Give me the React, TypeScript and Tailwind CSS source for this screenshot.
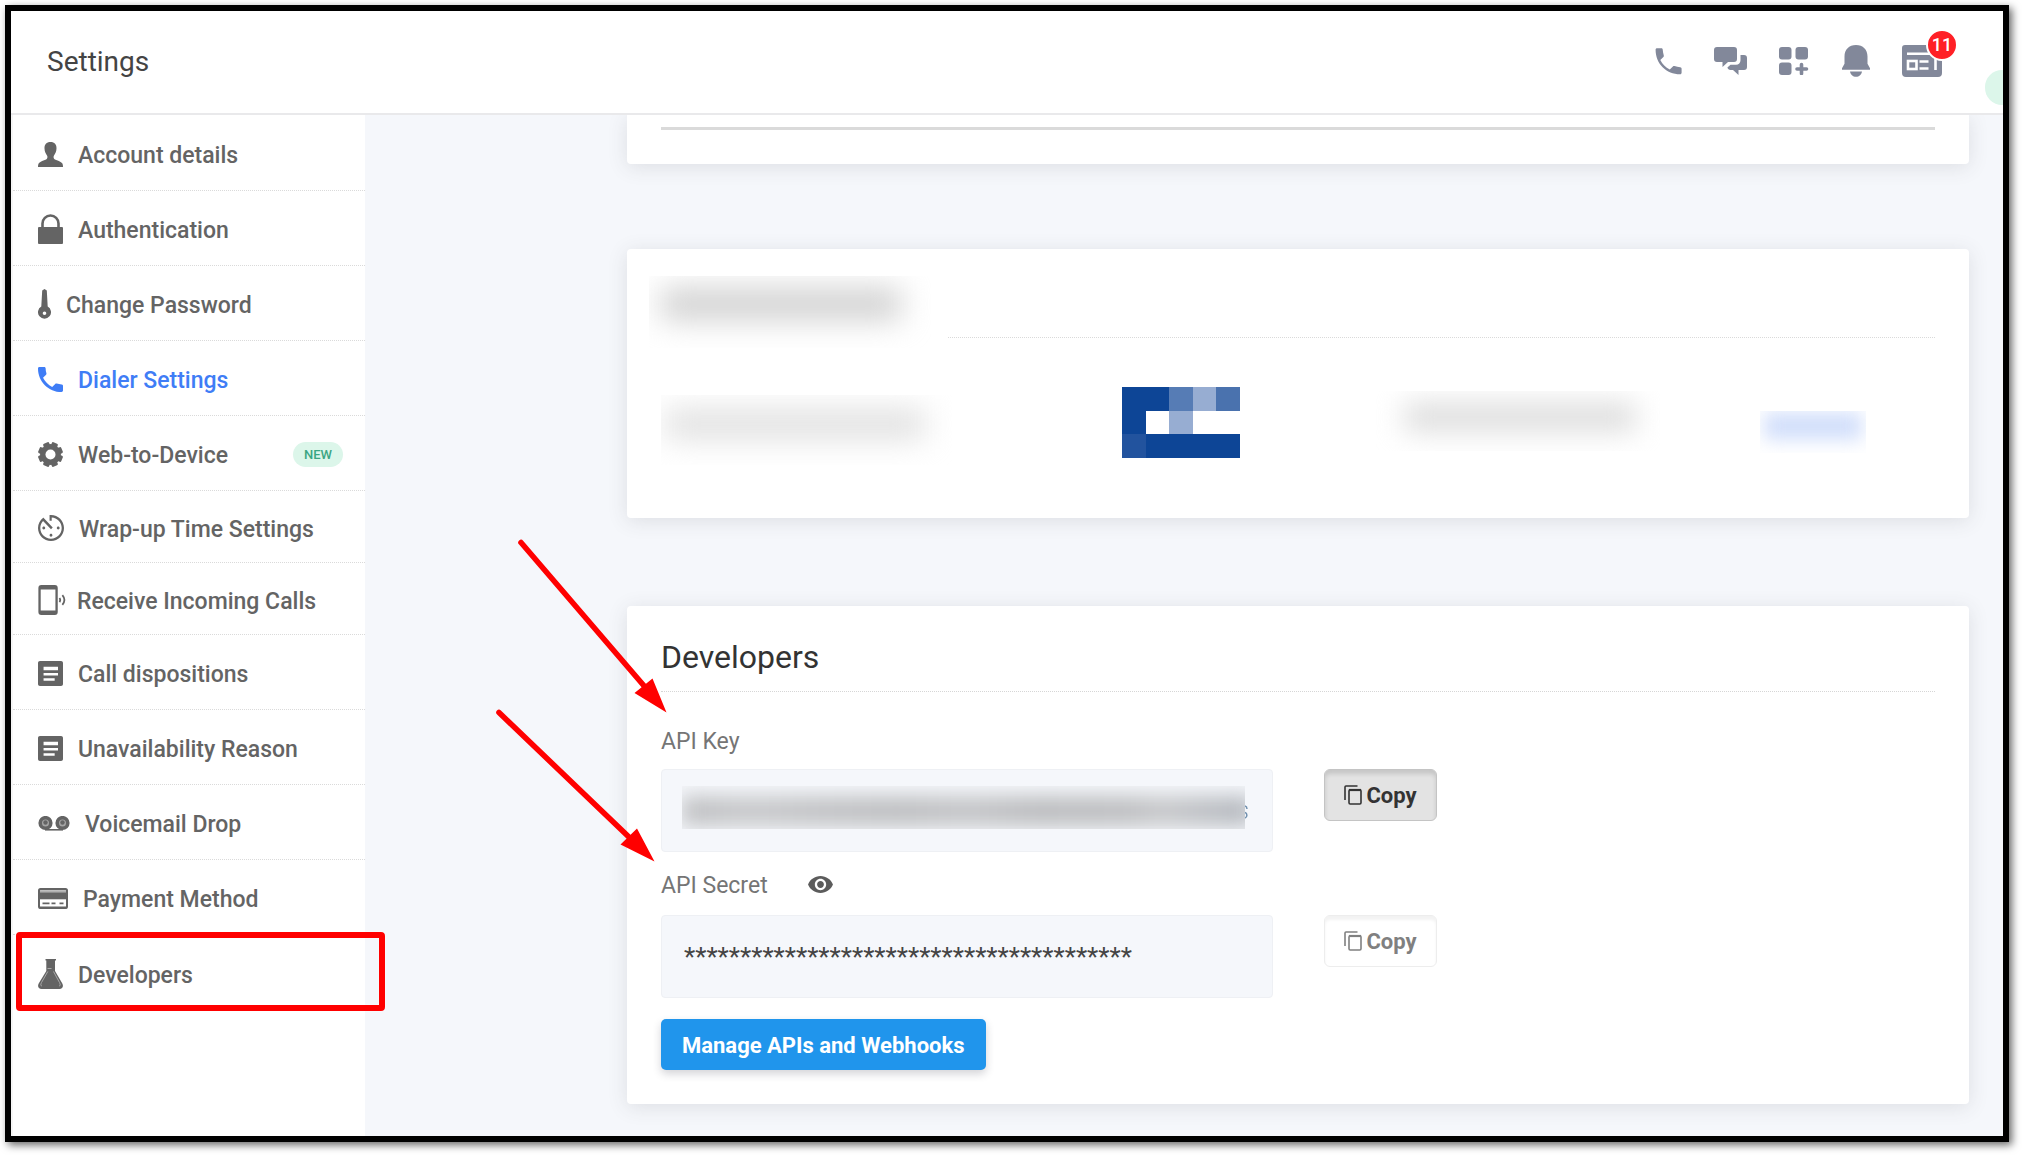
import type { ReactNode } from 'react';

const PHONE_PATH =
  'M6.62 10.79c1.44 2.83 3.76 5.14 6.59 6.59l2.2-2.2c.27-.27.67-.36 1.02-.24 1.12.37 2.33.57 3.57.57.55 0 1 .45 1 1V20c0 .55-.45 1-1 1-9.39 0-17-7.61-17-17 0-.55.45-1 1-1h3.5c.55 0 1 .45 1 1 0 1.25.2 2.45.57 3.57.11.35.03.74-.25 1.02l-2.2 2.2z';
const ARTICLE_PATH =
  'M19.6 3H4.4C3.6 3 3 3.6 3 4.4v15.2c0 .8.6 1.4 1.4 1.4h15.2c.8 0 1.4-.6 1.4-1.4V4.4c0-.8-.6-1.4-1.4-1.4zM15 17.2H7v-1.7h8v1.7zm2.4-3.8H7v-1.7h10.4v1.7zm0-3.8H7V7.2h10.4v2.4z';

const PersonIcon = () => (
  <svg width="25" height="25" viewBox="0 0 25 25" fill="currentColor">
    <path d="M12.5 0c4 0 6.2 2.6 6 6.5-.1 3.3-1.3 5.2-2.5 7-.8 1.3-.5 3.2.9 3.9 2.600 1.400 5.600 1.600 7.100 3.600.8 1 1 2.400 1 4H0c0-1.600.2-3 1-4 1.500-2 4.500-2.200 7.100-3.600 1.400-.7 1.700-2.600.9-3.900-1.200-1.800-2.400-3.700-2.500-7C6.300 2.600 8.500 0 12.500 0z" />
  </svg>
);

const LockIcon = () => (
  <svg width="25" height="30" viewBox="0 0 25 30">
    <path d="M4.500 14V9.500a8 8 0 0 1 16 0V14" fill="none" stroke="currentColor" strokeWidth="2.600" />
    <rect y="13" width="25" height="17" rx="1" fill="currentColor" />
  </svg>
);

const KeyIcon = () => (
  <svg width="13" height="30" viewBox="0 0 13 30" fill="currentColor" fillRule="evenodd">
    <path d="M4.200 1.500 6.500 0l2.300 1.500.9 16a6.500 6.500 0 1 1-6.400 0zM6.500 22.500a1.800 1.800 0 1 0 0 3.600 1.800 1.800 0 0 0 0-3.600z" />
  </svg>
);

const DialerIcon = () => (
  <svg width="25" height="25" viewBox="3 3 18 18" fill="currentColor">
    <path d={PHONE_PATH} />
  </svg>
);

const GearIcon = () => (
  <svg width="25" height="25" viewBox="0 0 25 25" fill="currentColor">
    {[22.5, 67.5, 112.5, 157.5].map((angle) => (
      <rect key={angle} x="9.300" y="0" width="6.400" height="25" rx="1.300" transform={`rotate(${angle} 12.5 12.5)`} />
    ))}
    <circle cx="12.500" cy="12.500" r="10.400" />
    <circle cx="12.500" cy="12.500" r="5" fill="#ffffff" />
  </svg>
);

const TimerIcon = () => (
  <svg width="26" height="26" viewBox="3 3 18 18" fill="currentColor">
    <path d="M11 17c0 .55.45 1 1 1s1-.45 1-1-.45-1-1-1-1 .45-1 1zm0-14v4h1.500V4.700c3.700.3 6.900 3.400 6.900 7.300 0 4.100-3.300 7.400-7.400 7.400S4.600 16.100 4.600 12c0-1.900.7-3.600 1.900-4.900L12 12.900l1.200-1.200-6.600-6.900v.02C4.420 6.450 3 9.050 3 12c0 4.970 4.020 9 9 9 4.970 0 9-4.030 9-9s-4.030-9-9-9h-1zm7 9c0-.55-.45-1-1-1s-1 .45-1 1 .45 1 1 1 1-.45 1-1zM6 12c0 .55.45 1 1 1s1-.45 1-1-.45-1-1-1-1 .45-1 1z" />
  </svg>
);

const IncomingIcon = () => (
  <svg width="24" height="30" viewBox="0 0 24 31" fill="none" stroke="currentColor" className="overflow-visible">
    <rect x="1.200" y="1.200" width="17.600" height="28.600" rx="1.800" strokeWidth="2.400" />
    <path d="M1 3h18M1 28h18" strokeWidth="3.400" />
    <path d="M21.800 13.500c.9 1.200.9 3 0 4.200" strokeWidth="1.800" />
    <path d="M24.800 10.500c2.500 3 2.500 7 0 10" strokeWidth="1.800" />
  </svg>
);

const ArticleIcon = () => (
  <svg width="25" height="25" viewBox="3 3 18 18" fill="currentColor">
    <path d={ARTICLE_PATH} />
  </svg>
);

const VoicemailIcon = () => (
  <svg width="32" height="15" viewBox="0 0 32 15">
    <path d="M7 13.800h18" stroke="currentColor" strokeWidth="1.600" />
    <circle cx="7.500" cy="7" r="5.300" fill="#a5a5a5" stroke="currentColor" strokeWidth="3.600" />
    <circle cx="24.500" cy="7" r="5.300" fill="#a5a5a5" stroke="currentColor" strokeWidth="3.600" />
    <circle cx="7.500" cy="6.500" r="2.200" fill="currentColor" />
    <circle cx="24.500" cy="6.500" r="2.200" fill="currentColor" />
  </svg>
);

const CardIcon = () => (
  <svg width="30" height="21" viewBox="0 0 30 21">
    <rect x="1" y="1" width="28" height="19" rx="1.500" fill="#ffffff" stroke="currentColor" strokeWidth="2" />
    <path d="M2 3.200h26" stroke="#b0b0b0" strokeWidth="2" />
    <path d="M1 7.800h28" stroke="currentColor" strokeWidth="7" />
    <path d="M4.500 15.300h7M13.500 15.300h4M21.500 15.300h4" stroke="currentColor" strokeWidth="1.800" />
    <path d="M1 19.500h28" stroke="currentColor" strokeWidth="2" />
  </svg>
);

const FlaskIcon = () => (
  <svg width="25" height="30" viewBox="0 0 25 30">
    <path d="M7.500 0h10.500v1.500h-1V12l7.300 12.500c1.500 2.800.2 5.500-2.800 5.500h-18c-3 0-4.300-2.700-2.800-5.500L8.300 12V1.500h-.8z" fill="currentColor" />
    <path d="M9.500 9.500h4M9.800 12.500 3.500 23.500c-1.200 2.300-.8 3.500.5 3.500M15.500 12.500l6 11c1.200 2.300.8 3.500-.5 3.500" fill="none" stroke="#a8a8a8" strokeWidth="1" />
  </svg>
);

interface NavItem {
  label: string;
  icon: ReactNode;
  active?: boolean;
  isNew?: boolean;
  compact?: boolean;
  marked?: boolean;
}

const navItems: NavItem[] = [
  { label: 'Account details', icon: <PersonIcon /> },
  { label: 'Authentication', icon: <LockIcon /> },
  { label: 'Change Password', icon: <KeyIcon /> },
  { label: 'Dialer Settings', icon: <DialerIcon />, active: true },
  { label: 'Web-to-Device', icon: <GearIcon />, isNew: true },
  { label: 'Wrap-up Time Settings', icon: <TimerIcon />, compact: true },
  { label: 'Receive Incoming Calls', icon: <IncomingIcon />, compact: true },
  { label: 'Call dispositions', icon: <ArticleIcon /> },
  { label: 'Unavailability Reason', icon: <ArticleIcon /> },
  { label: 'Voicemail Drop', icon: <VoicemailIcon /> },
  { label: 'Payment Method', icon: <CardIcon /> },
  { label: 'Developers', icon: <FlaskIcon />, marked: true },
];

function Sidebar() {
  return (
    <nav className="w-[354px] shrink-0 border-l-2 border-[#f6f6f6] bg-white pt-px">
      {navItems.map(({ label, icon, active, isNew, compact, marked }) => (
        <a
          key={label}
          href="#"
          className={`relative flex items-center gap-[15px] pt-[2px] pr-[22px] pl-[25px] text-[23px] leading-7 font-medium ${
            compact ? 'h-[72px]' : 'h-[75px]'
          } ${active ? 'text-[#3f7df6]' : 'text-[#646464]'} ${marked ? '' : 'border-b border-dotted border-[#dadada]'}`}
        >
          {icon}
          <span className="pt-1">{label}</span>
          {isNew && (
            <span className="ml-auto rounded-full bg-[#dcf6ea] px-[11px] text-[13px] leading-[25px] text-[#3ba583]">NEW</span>
          )}
          {marked && (
            <span className="pointer-events-none absolute -top-[3px] -right-5 -bottom-px left-[3px] z-10 rounded-[4px] border-6 border-[#ff0000] shadow-[0_0_2px_#ffffff,inset_0_0_2px_#ffffff]" />
          )}
        </a>
      ))}
    </nav>
  );
}

function Header() {
  return (
    <header className="relative flex h-[104px] items-center justify-between overflow-hidden border-b-2 border-[#e9e9eb] bg-white pr-[61px] pl-9">
      <h1 className="text-[28px] leading-9 text-[#444444]">Settings</h1>
      <div className="flex items-center gap-8 pb-[2px] text-[#82889a]">
        <button aria-label="Phone">
          <svg width="27" height="27" viewBox="0 0 27 27" fill="currentColor">
            <path d="M2 .3h4.200c.9 0 1.400.5 1.500 1.300.2 2 .5 4 1.100 5.800.2.600.1 1.100-.4 1.600L5.300 12.100c2.100 4.200 5.300 7.400 9.500 9.500l3.100-3.100c.5-.5 1-.6 1.600-.4 1.900.6 3.700.9 5.700 1.100.9.1 1.400.7 1.400 1.500v4.100c0 .9-.6 1.500-1.400 1.500C11.300 26.300.6 15.700.6 1.700.6.900 1.200.3 2 .3z" />
          </svg>
        </button>
        <button aria-label="Messages">
          <svg width="33" height="30" viewBox="0 0 33 30" fill="currentColor">
            <path d="M3 1h17a3 3 0 0 1 3 3v9a3 3 0 0 1-3 3h-6l-5.500 5v-5H3a3 3 0 0 1-3-3V4a3 3 0 0 1 3-3z" />
            <path d="M26.500 9H30a3 3 0 0 1 3 3v9a3 3 0 0 1-3 3h-5.500v5L19 24h-2.500c-1.600 0-2.700-1-3.100-2.400l3.100-2.800h5.500c2.700 0 4.500-1.800 4.500-4.500z" />
          </svg>
        </button>
        <button aria-label="Apps">
          <svg width="31" height="28" viewBox="0 0 31 28" fill="currentColor">
            <rect width="12.500" height="12.500" rx="3" />
            <rect x="16.500" width="12.500" height="12.500" rx="3" />
            <rect y="15.500" width="12.500" height="12.500" rx="3" />
            <path d="M22.500 17.500v9M18 22h9.500" fill="none" stroke="currentColor" strokeWidth="3.600" strokeLinecap="round" />
          </svg>
        </button>
        <button aria-label="Notifications">
          <svg width="28" height="32" viewBox="0 0 28 32" fill="currentColor">
            <path d="M14 0c7 0 11.500 4.700 11.500 11.500v7.300l2.500 4.400v1.600H0v-1.600l2.500-4.400v-7.300C2.500 4.700 7 0 14 0z" />
            <path d="M8 26.500h12c-.3 3-3 5.300-6 5.300s-5.700-2.300-6-5.300z" />
          </svg>
        </button>
        <button aria-label="News" className="relative">
          <svg width="40" height="32" viewBox="0 0 40 32" fill="currentColor">
            <path d="M3 0h30v14h7v14a4 4 0 0 1-4 4H4a4 4 0 0 1-4-4V3a3 3 0 0 1 3-3z" />
            <g fill="none" stroke="#ffffff" strokeWidth="2.600">
              <path d="M5 8.700h23M17.500 16.500h9M17.500 23.500h9M33.500 13v12" />
              <rect x="6" y="16" width="8.500" height="8" />
            </g>
          </svg>
          <span className="absolute -top-4 -right-4 flex h-8 w-8 items-center justify-center rounded-full border-2 border-white bg-[#ff2026] text-lg leading-none font-medium text-white">
            11
          </span>
        </button>
      </div>
      <span className="absolute -right-4 bottom-2 h-[35px] w-[34px] rounded-full bg-[#dcf6ea]" />
    </header>
  );
}

function Card({ children, className }: { children: ReactNode; className: string }) {
  return <section className={`relative rounded-[4px] bg-white px-[34px] shadow-[0_3px_20px_rgba(60,60,70,0.13)] ${className}`}>{children}</section>;
}

// Censored card brand, one colour per block
const logoBlocks = [
  'bg-[#0d4596]', 'bg-[#0d4596]', 'bg-[#567cb5]', 'bg-[#97add2]', 'bg-[#4a72ae]',
  'bg-[#0d4596]', 'bg-white', 'bg-[#97add2]', 'bg-white', 'bg-white',
  'bg-[#22539e]', 'bg-[#0d4596]', 'bg-[#0d4596]', 'bg-[#0d4596]', 'bg-[#0d4596]',
];

function PaymentCard() {
  return (
    <Card className="mt-[85px] h-[269px]">
      <div className="-ml-3 flex h-[89px] items-start gap-[17px]">
        <div className="mt-[27px] h-[72px] w-[282px] overflow-hidden pt-3 pl-3">
          <div className="h-8 w-[240px] bg-[#d0d0d0] blur-[15px]" />
        </div>
        <div className="flex-1 self-end border-b border-dotted border-[#dadada]" />
      </div>
      <div className="grid grid-cols-[461px_254px_1fr_106px] items-start pt-[49px] pr-[69px]">
        <div className="mt-2 h-[70px] w-[292px] overflow-hidden pt-[14px] pl-1">
          <div className="h-[30px] w-[260px] bg-[#e0e0e0] blur-[15px]" />
        </div>
        <div className="grid h-[71px] w-[118px] grid-cols-5 grid-rows-3">
          {logoBlocks.map((color, i) => (
            <span key={i} className={color} />
          ))}
        </div>
        <div className="mt-1 h-[60px] w-[284px] overflow-hidden pt-3 pl-[28px]">
          <div className="h-[28px] w-[232px] bg-[#dcdcdc] blur-[14px]" />
        </div>
        <div className="mt-6 h-[42px] w-[106px] overflow-hidden px-1 pt-px">
          <div className="h-[28px] bg-[#d2dffb] blur-[9px]" />
        </div>
      </div>
    </Card>
  );
}

function CopyButton({ pressed }: { pressed?: boolean }) {
  return (
    <button
      className={`flex h-[52px] w-[113px] shrink-0 items-center justify-center gap-[4px] rounded-[6px] border text-[22px] font-bold ${
        pressed
          ? 'border-[#c4c4c4] bg-[#e3e3e3] text-[#333333] shadow-[inset_0_4px_4px_rgba(0,0,0,0.13)]'
          : 'border-[#ededed] bg-white text-[#808080] shadow-[inset_0_4px_3px_rgba(0,0,0,0.05)]'
      }`}
    >
      <svg width="18" height="20" viewBox="0 0 18 20" fill="none" stroke="currentColor">
        <path d="M1 15V2c0-.6.400-1 1-1h11.500" strokeWidth="1.600" />
        <rect x="5" y="4.800" width="12" height="14.200" rx="1.200" strokeWidth="1.600" />
        <path d="M5 5h12" strokeWidth="2.200" />
      </svg>
      <span>Copy</span>
    </button>
  );
}

function Arrows() {
  return (
    <svg className="pointer-events-none absolute -top-[76px] -left-[142px] z-10" width="190" height="340" viewBox="485 530 190 340">
      <g stroke="#ff0000" strokeWidth="5.600" strokeLinecap="round">
        <path d="M521 542.500 645 687" />
        <path d="M499 712.500 631 839" />
      </g>
      <path d="M666.500 712.500 634.500 693l18-14.500zM654.500 861.500 620.500 844.500l16.500-16z" fill="#ff0000" />
    </svg>
  );
}

function DevelopersCard() {
  return (
    <Card className="mt-[88px] pt-8 pb-[34px]">
      <h2 className="border-b border-dotted border-[#d6d6d6] pb-[15px] text-[32px] leading-[38px] text-[#333333]">Developers</h2>
      <label htmlFor="api-key" className="mt-[36px] mb-[13px] block w-fit text-[23px] leading-7 text-[#757575]">
        API Key
      </label>
      <div className="flex items-start gap-[51px]">
        <div className="relative w-[612px] min-w-0">
          <input id="api-key" readOnly className="block h-[83px] w-full rounded-[4px] border border-[#eef0f4] bg-[#f5f7fb] px-[22px]" />
          <div className="pointer-events-none absolute inset-x-0 top-[17px] mr-7 ml-[21px] h-[43px] overflow-hidden py-[10px]">
            <div className="-mr-2 h-[30px] bg-[linear-gradient(90deg,#bfc0c2,#c8c9cb_12%,#c2c3c5_25%,#bebfc1_38%,#c4c5c7_50%,#bcbdbf_62%,#bebfc1_78%,#c7c8ca_84%,#b4b8be)] blur-[10px]" />
          </div>
          <svg className="pointer-events-none absolute top-9 right-[25px]" width="3" height="14" viewBox="0 0 3 14" fill="none" stroke="#6f8fae" strokeWidth="1.500">
            <path d="M0 1c1.500.4 2 1.500 2 3M0 7.500c2.500 1 2.500 4.500 0 5.500" />
          </svg>
        </div>
        <CopyButton pressed />
      </div>
      <div className="mt-[20px] mb-[15px] flex items-center gap-[40px] text-[23px] leading-7 text-[#757575]">
        <label htmlFor="api-secret">API Secret</label>
        <button aria-label="Show API secret" className="pb-1 text-[#5c5c5c]">
          <svg width="25" height="17" viewBox="1 4.500 22 15" fill="currentColor">
            <path d="M12 4.500C7 4.500 2.730 7.610 1 12c1.730 4.390 6 7.500 11 7.500s9.270-3.110 11-7.500c-1.730-4.390-6-7.500-11-7.500zM12 17c-2.760 0-5-2.240-5-5s2.240-5 5-5 5 2.240 5 5-2.240 5-5 5zm0-8c-1.660 0-3 1.340-3 3s1.340 3 3 3 3-1.340 3-3-1.340-3-3-3z" />
          </svg>
        </button>
      </div>
      <div className="flex items-start gap-[51px]">
        <input
          id="api-secret"
          readOnly
          value="****************************************"
          className="block h-[83px] w-[612px] min-w-0 rounded-[4px] border border-[#eef0f4] bg-[#f5f7fb] px-[22px] text-[26px] text-[#444444]"
        />
        <CopyButton />
      </div>
      <button className="mt-[21px] block h-[51px] rounded-[5px] bg-[#2095ec] px-[21px] pt-[2px] text-[22px] leading-7 font-bold text-white shadow-[0_4px_8px_rgba(40,40,60,0.2)]">
        Manage APIs and Webhooks
      </button>
      <Arrows />
    </Card>
  );
}

export default function App() {
  return (
    <div className="flex min-h-screen bg-white pt-[5px] pr-[13px] pb-[13px] pl-[5px] font-['Roboto',sans-serif]">
      <div className="flex min-w-0 flex-1 flex-col border-6 border-black bg-white shadow-[3px_3px_8px_rgba(0,0,0,0.6)]">
        <Header />
        <div className="flex flex-1">
          <Sidebar />
          <main className="min-w-0 flex-1 overflow-clip bg-[#f5f7fb] pr-[34px] pb-8 pl-[262px]">
            <Card className="h-[49px] rounded-t-none pt-3">
              <div className="h-[3px] bg-[#dadada]" />
            </Card>
            <PaymentCard />
            <DevelopersCard />
          </main>
        </div>
      </div>
    </div>
  );
}
